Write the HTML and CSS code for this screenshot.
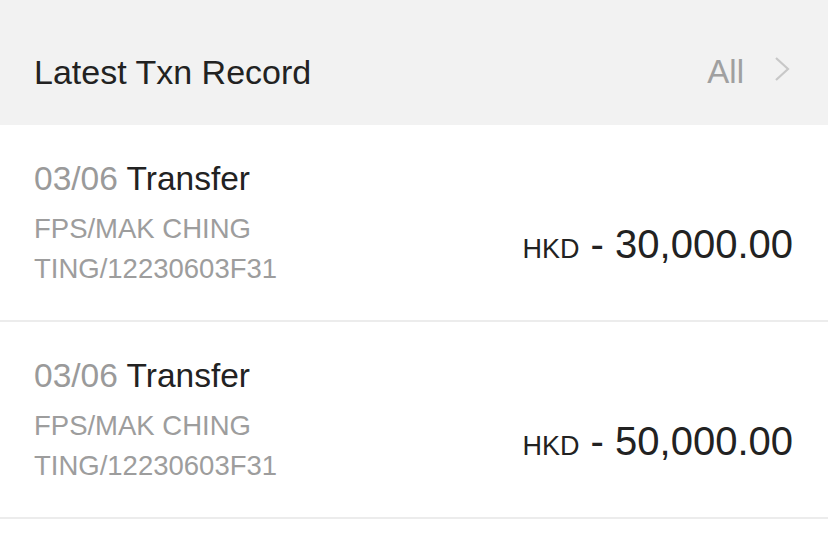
FILE: index.html
```html
<!DOCTYPE html>
<html lang="en">
<head>
    <meta charset="UTF-8">
    <meta name="viewport" content="width=device-width, initial-scale=1.0">
    <title>Latest Txn Record</title>
    <link rel="stylesheet" href="styles.css">
</head>
<body>
    <div class="txn-header">
        <span class="txn-title">Latest Txn Record</span>
        <a class="txn-all" href="#">All
            <svg class="chevron" width="16" height="26" viewBox="0 0 16 26">
                <polyline points="2,2 14,13 2,24" fill="none" stroke="#c8c8c8" stroke-width="2.2" stroke-linejoin="miter"/>
            </svg>
        </a>
    </div>

    <div class="txn-row">
        <div class="txn-info">
            <div class="txn-name"><span class="txn-date">03/06</span> Transfer</div>
            <div class="txn-desc">FPS/MAK CHING<br>TING/12230603F31</div>
        </div>
        <div class="txn-amount"><span class="txn-cur">HKD</span> - 30,000.00</div>
    </div>

    <div class="txn-row">
        <div class="txn-info">
            <div class="txn-name"><span class="txn-date">03/06</span> Transfer</div>
            <div class="txn-desc">FPS/MAK CHING<br>TING/12230603F31</div>
        </div>
        <div class="txn-amount"><span class="txn-cur">HKD</span> - 50,000.00</div>
    </div>
</body>
</html>
```

FILE: styles.css
```css
body {
    margin: 0;
    font-family: "Liberation Sans", Arial, sans-serif;
    background: #fff;
    color: #222;
}

/* Header bar */
.txn-header {
    display: flex;
    justify-content: space-between;
    align-items: center;
    height: 125px;
    padding: 18px 38px 0 34px;
    box-sizing: border-box;
    background-color: #f2f2f2;
}
.txn-title {
    font-size: 34px;
    line-height: 38px;
    color: #222;
}
.txn-all {
    display: flex;
    align-items: center;
    gap: 30px;
    font-size: 33px;
    line-height: 38px;
    color: #a0a0a0;
    text-decoration: none;
}
.chevron {
    display: block;
    margin-top: -6px;
}

/* Transaction rows */
.txn-row {
    display: flex;
    justify-content: space-between;
    padding: 34px 35px 31px 34px;
    border-bottom: 2px solid #ececec;
}
.txn-name {
    font-size: 33.5px;
    line-height: 40px;
    margin-bottom: 10px;
    color: #222;
}
.txn-date {
    color: #9a9a9a;
}
.txn-desc {
    font-size: 27.5px;
    line-height: 40px;
    color: #9d9d9d;
}
.txn-amount {
    align-self: flex-end;
    margin-bottom: 17px;
    font-size: 40px;
    line-height: 46px;
    color: #222;
}
.txn-cur {
    font-size: 27px;
}
```
